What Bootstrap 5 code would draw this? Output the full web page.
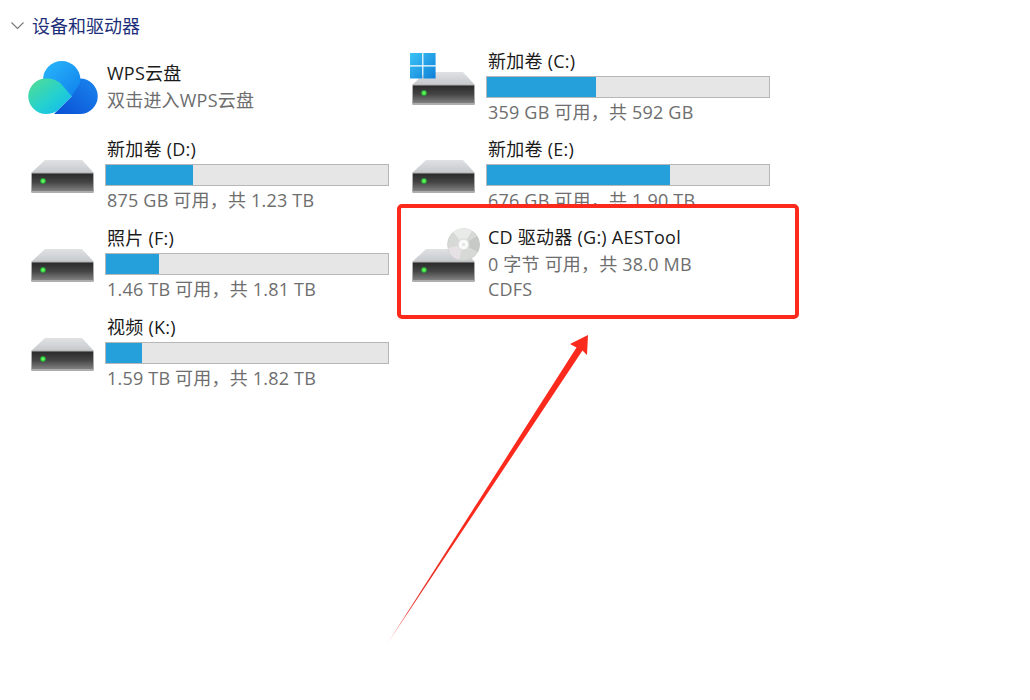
<!DOCTYPE html>
<html lang="zh">
<head>
<meta charset="utf-8">
<title>设备和驱动器</title>
<link href="https://cdn.jsdelivr.net/npm/bootstrap@5.3.0/dist/css/bootstrap.min.css" rel="stylesheet">
<style>
html,body{height:100%;background:#fff;overflow:hidden}
.pane{position:relative;width:1030px;height:700px;font-family:"Open Sans","Noto Sans CJK SC",sans-serif;font-size:18px;color:#1a1a1a}
.head{height:49px;padding:14px 0 0 11px;color:#1c2f78;gap:8px;line-height:24px}
.head svg{flex:none}
.drives{display:grid;grid-template-columns:381px 381px;grid-template-rows:88px 89px 89px 89px;padding-left:31px}
.tile{position:relative;gap:11px;height:75px}
.tile .ico{flex:none;width:63px;height:33px;margin-top:4px}
.tile .ico svg{display:block}
.info{width:284px;flex:none;line-height:24px}
.info>div.txt{padding-left:2px;white-space:nowrap}
.ttl{height:25px;margin-bottom:2px;letter-spacing:.25px}
.sub{color:#6e6e6e;letter-spacing:.2px}
.meter{height:22px;border:1px solid #b7b7b7;border-radius:0;background:#e6e6e6;margin-bottom:2px}
.meter .progress-bar{background:#26a0da}
.box{position:absolute;left:-15px;top:-22px;width:402px;height:115px;border:4.5px solid #fb2a1c;border-radius:5px;background:#fff}
.tile>.ico,.tile>.info{position:relative}
.wps{width:70px;height:54px;margin-left:-3px;margin-right:-4px;flex:none;margin-top:2px}
.arrow{position:absolute;left:0;top:0;pointer-events:none}
.g-ttl{margin-bottom:2px;margin-top:-1px}
.g-sub{margin-bottom:1px}
.w-ttl{margin-bottom:2px}
</style>
</head>
<body>
<svg width="0" height="0" style="position:absolute">
<defs>
<linearGradient id="top" x1="0" y1="0" x2="0" y2="1"><stop offset="0" stop-color="#dfe1e3"/><stop offset="1" stop-color="#c6c9cc"/></linearGradient>
<linearGradient id="body" x1="0" y1="0" x2="0" y2="1"><stop offset="0" stop-color="#2a2a2a"/><stop offset=".5" stop-color="#454545"/><stop offset="1" stop-color="#808080"/></linearGradient>
<radialGradient id="led"><stop offset="0" stop-color="#8dff7a"/><stop offset=".6" stop-color="#2fdc3e"/><stop offset="1" stop-color="#2a7a34" stop-opacity=".5"/></radialGradient>
<symbol id="drive" viewBox="0 0 63 33">
<path d="M14 0H51L63 13H0Z" fill="url(#top)"/>
<rect x="0" y="12.500" width="63" height="20.500" rx="1.500" fill="#adadad"/>
<rect x="1" y="13.500" width="61" height="17.500" fill="url(#body)"/>
<circle cx="12" cy="21" r="3.200" fill="url(#led)"/>
</symbol>
<linearGradient id="w1" x1="0" y1="0" x2="1" y2="1"><stop offset="0" stop-color="#3cc4f5"/><stop offset="1" stop-color="#0f7fd8"/></linearGradient>
<linearGradient id="ct" x1="0" y1="0" x2="1" y2="1"><stop offset="0" stop-color="#2ab8fb"/><stop offset="1" stop-color="#0f80ec"/></linearGradient>
<linearGradient id="cr" x1="0" y1="1" x2="1" y2="0"><stop offset="0" stop-color="#0a4fd4"/><stop offset="1" stop-color="#1a86ee"/></linearGradient>
<linearGradient id="cl" x1="0" y1="0" x2="1" y2="1"><stop offset="0" stop-color="#55dd90"/><stop offset=".55" stop-color="#24d0d0"/><stop offset="1" stop-color="#0db6f6"/></linearGradient>
</defs>
</svg>
<main class="pane">
<div class="head d-flex align-items-start">
<svg width="13" height="24" viewBox="0 0 13 24"><path d="M.5 8.500 6.500 14.500 12.500 8.500" fill="none" stroke="#777" stroke-width="1.1"/></svg>
<span>设备和驱动器</span>
</div>
<div class="drives">
<div class="tile d-flex align-items-center">
<svg class="wps" viewBox="0 0 70 54"><path d="M52 17.500A17.700 17.700 0 0 1 52 53H26L43.700 35.300 46 20Z" fill="url(#cr)"/><path d="M15 18.700A18.700 18.700 0 0 1 52.400 18.700 18 18 0 0 1 52 22L43.700 35.300 30 35 15 20Z" fill="url(#ct)"/><path d="M18 17.500C26 17.500 31 20 35 25L43.700 35.300 29 50C26 52 22 53 18 53A17.750 17.750 0 0 1 18 17.500Z" fill="url(#cl)"/></svg>
<div class="info"><div class="txt ttl w-ttl">WPS云盘</div><div class="txt sub">双击进入WPS云盘</div></div>
</div>
<div class="tile d-flex align-items-center">
<div class="ico"><svg width="63" height="33"><use href="#drive"/></svg></div>
<div class="info"><div class="txt ttl">新加卷 (C:)</div><div class="progress meter"><div class="progress-bar" style="width:38.7%"></div></div><div class="txt sub">359 GB 可用，共 592 GB</div></div>
<svg class="position-absolute" style="left:-2px;top:4px" width="26" height="26" viewBox="0 0 26 26"><path d="M0 0H12.200V12.200H0ZM13.400 0H25.600V12.200H13.400ZM0 13.400H12.200V25.600H0ZM13.400 13.400H25.600V25.600H13.400Z" fill="url(#w1)"/></svg>
</div>
<div class="tile d-flex align-items-center">
<div class="ico"><svg width="63" height="33"><use href="#drive"/></svg></div>
<div class="info"><div class="txt ttl">新加卷 (D:)</div><div class="progress meter"><div class="progress-bar" style="width:30.9%"></div></div><div class="txt sub">875 GB 可用，共 1.23 TB</div></div>
</div>
<div class="tile d-flex align-items-center">
<div class="ico"><svg width="63" height="33"><use href="#drive"/></svg></div>
<div class="info"><div class="txt ttl">新加卷 (E:)</div><div class="progress meter"><div class="progress-bar" style="width:65%"></div></div><div class="txt sub">676 GB 可用，共 1.90 TB</div></div>
</div>
<div class="tile d-flex align-items-center">
<div class="ico"><svg width="63" height="33"><use href="#drive"/></svg></div>
<div class="info"><div class="txt ttl">照片 (F:)</div><div class="progress meter"><div class="progress-bar" style="width:18.8%"></div></div><div class="txt sub">1.46 TB 可用，共 1.81 TB</div></div>
</div>
<div class="tile d-flex align-items-center">
<div class="box"></div>
<div class="ico"><svg width="63" height="33"><use href="#drive"/></svg></div>
<svg class="position-absolute" style="left:35px;top:2px" width="33" height="33" viewBox="0 0 33 33"><circle cx="16.500" cy="16.500" r="16" fill="#d6d9d6" stroke="#c4c7c4" stroke-width=".6"/><path d="M16.500 16.500 6 4A16 16 0 0 1 25 3Z" fill="#e9ebe9"/><path d="M16.500 16.500 30 8A16 16 0 0 1 31 24Z" fill="#c6c9c6"/><path d="M16.500 16.500 12 32A16 16 0 0 1 1 20Z" fill="#e6e1e4"/><circle cx="16.500" cy="16.500" r="5.500" fill="#f8f9f8" stroke="#d6d8d6"/><circle cx="16.500" cy="16.500" r="1.500" fill="#e2e4e2"/></svg>
<div class="info"><div class="txt ttl g-ttl">CD 驱动器 (G:) AESTool</div><div class="txt sub g-sub">0 字节 可用，共 38.0 MB</div><div class="txt sub">CDFS</div></div>
</div>
<div class="tile d-flex align-items-center">
<div class="ico"><svg width="63" height="33"><use href="#drive"/></svg></div>
<div class="info"><div class="txt ttl">视频 (K:)</div><div class="progress meter"><div class="progress-bar" style="width:12.8%"></div></div><div class="txt sub">1.59 TB 可用，共 1.82 TB</div></div>
</div>
</div>
<svg class="arrow" width="1030" height="700" viewBox="0 0 1030 700"><defs><linearGradient id="ar" gradientUnits="userSpaceOnUse" x1="387" y1="644" x2="470" y2="520"><stop offset="0" stop-color="#fb2a1c" stop-opacity=".4"/><stop offset=".25" stop-color="#e0352a"/><stop offset="1" stop-color="#fb2a1c"/></linearGradient></defs><path d="M386.500 645 576.500 347.500 570 344 588 335 587 355 582.500 350.500Z" fill="url(#ar)"/></svg>
</main>
<script src="https://cdn.jsdelivr.net/npm/bootstrap@5.3.0/dist/js/bootstrap.bundle.min.js"></script>
</body>
</html>
